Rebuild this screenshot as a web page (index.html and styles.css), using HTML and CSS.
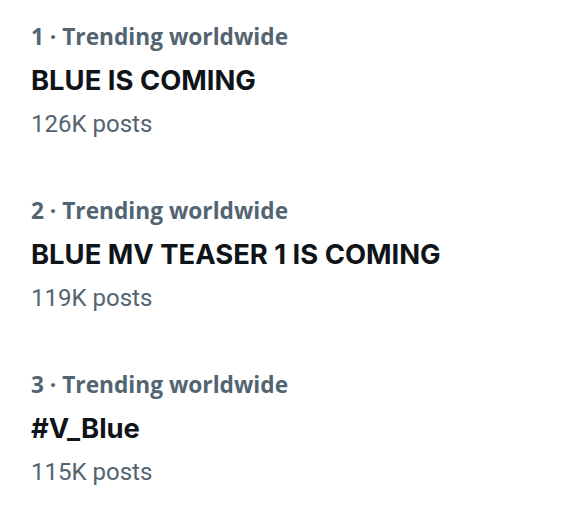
FILE: index.html
```html
<!DOCTYPE html>
<html lang="en">
<head>
    <meta charset="UTF-8">
    <meta name="viewport" content="width=device-width, initial-scale=1.0">
    <title>Trends</title>
    <link rel="stylesheet" href="styles.css">
</head>
<body>

    <div class="trends">
        <div class="trend">
            <div class="meta">1 · Trending worldwide</div>
            <div class="name">BLUE IS COMING</div>
            <div class="count">126K posts</div>
        </div>
        <div class="trend">
            <div class="meta">2 · Trending worldwide</div>
            <div class="name">BLUE MV TEASER 1 IS COMING</div>
            <div class="count">119K posts</div>
        </div>
        <div class="trend">
            <div class="meta">3 · Trending worldwide</div>
            <div class="name">#V_Blue</div>
            <div class="count">115K posts</div>
        </div>
    </div>

</body>
</html>
```

FILE: styles.css
```css
body {
    margin: 0;
    padding: 0;
    background: #ffffff;
    font-family: 'Inter', 'Roboto', sans-serif;
}

.trends {
    display: flex;
    flex-direction: column;
    gap: 47px;
    padding: 17px 31px;
}

.trend {
    display: flex;
    flex-direction: column;
}

.meta {
    font-family: 'Open Sans', sans-serif;
    font-weight: 700;
    font-size: 22.7px;
    line-height: 40px;
    color: #536471;
}

.name {
    font-size: 27.4px;
    font-weight: 700;
    line-height: 47px;
    color: #0f1419;
}

.count {
    font-family: 'Roboto', sans-serif;
    font-size: 24px;
    line-height: 40px;
    color: #536471;
}
```
